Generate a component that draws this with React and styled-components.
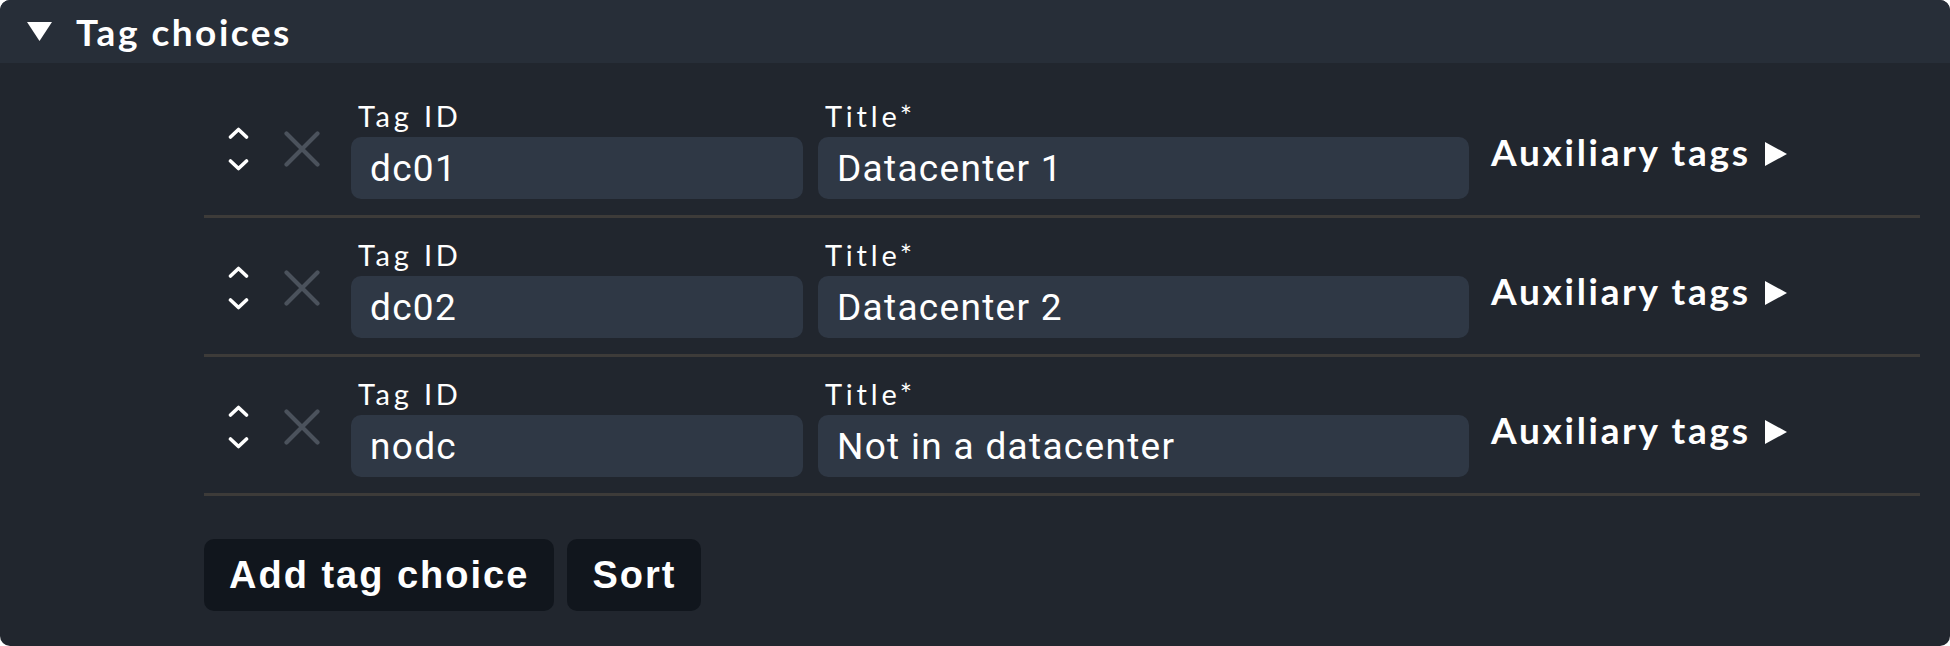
import React from "react";
import styled, { createGlobalStyle } from "styled-components";

const Global = createGlobalStyle`
  html, body { margin: 0; padding: 0; background: #ffffff; }
  #root { width: 1950px; height: 646px; }
`;

const Panel = styled.section`
  width: 1950px;
  height: 646px;
  box-sizing: border-box;
  background: #21262e;
  border-radius: 10px;
  overflow: hidden;
  display: flex;
  flex-direction: column;
`;

const Header = styled.header`
  height: 63px;
  flex: 0 0 63px;
  background: #272e38;
  display: flex;
  align-items: center;
  padding-left: 27px;
  gap: 24px;
  color: #ffffff;
  font-family: Lato, "Liberation Sans", sans-serif;
  font-weight: 700;
  font-size: 37px;
  letter-spacing: 2.5px;
`;

const Body = styled.div`
  padding: 16px 30px 0 204px;
  display: flex;
  flex-direction: column;
`;

const Row = styled.div`
  display: flex;
  align-items: center;
  padding: 20px 0 16px 24px;
  border-bottom: 3px solid #3d3b39;
`;

const Mover = styled.div`
  display: flex;
  flex-direction: column;
  align-items: center;
  gap: 20px;
  width: 21px;
  margin-right: 35px;
`;

const RemoveButton = styled.div`
  width: 36px;
  height: 36px;
  margin-right: 31px;
  display: flex;
`;

const Field = styled.label`
  display: flex;
  flex-direction: column;
  gap: 4px;
  width: ${(p) => p.$width}px;
  margin-right: ${(p) => p.$gap}px;
`;

const FieldLabel = styled.span`
  font-family: Lato, "Liberation Sans", sans-serif;
  font-size: 29px;
  line-height: 34px;
  letter-spacing: 3.8px;
  color: #ffffff;
  padding-left: 7px;
`;

const Input = styled.div`
  height: 62px;
  box-sizing: border-box;
  background: #2f3845;
  border-radius: 10px;
  padding-left: 19px;
  display: flex;
  align-items: center;
  font-family: Roboto, "Liberation Sans", sans-serif;
  font-size: 37px;
  letter-spacing: 1.3px;
  color: #ffffff;
`;

const AuxToggle = styled.div`
  display: flex;
  align-items: center;
  gap: 14px;
  padding-top: 5px;
  color: #ffffff;
  font-family: Lato, "Liberation Sans", sans-serif;
  font-weight: 700;
  font-size: 37px;
  letter-spacing: 2.7px;
`;

const Actions = styled.div`
  display: flex;
  gap: 13px;
  margin-top: 43px;
`;

const Button = styled.button`
  height: 72px;
  padding: 0 25px;
  border: none;
  border-radius: 10px;
  background: #11161d;
  color: #ffffff;
  font-family: "Liberation Sans", Arial, sans-serif;
  font-weight: 700;
  font-size: 38px;
  letter-spacing: 2px;
`;

const DownTriangle = () => (
  <svg width="25" height="19" viewBox="0 0 25 19">
    <polygon points="0,0 25,0 12.5,19" fill="#ffffff" />
  </svg>
);

const RightTriangle = () => (
  <svg width="22" height="24" viewBox="0 0 22 24" style={{ marginTop: 5 }}>
    <polygon points="0,0 22,12 0,24" fill="#ffffff" />
  </svg>
);

const ChevronUp = () => (
  <svg width="21" height="12" viewBox="0 0 21 12">
    <polyline points="2.5,10 10.5,2.5 18.5,10" fill="none" stroke="#ffffff" strokeWidth="3.6" strokeLinecap="round" strokeLinejoin="round" />
  </svg>
);

const ChevronDown = () => (
  <svg width="21" height="12" viewBox="0 0 21 12">
    <polyline points="2.5,2 10.5,9.5 18.5,2" fill="none" stroke="#ffffff" strokeWidth="3.6" strokeLinecap="round" strokeLinejoin="round" />
  </svg>
);

const Cross = () => (
  <svg width="36" height="36" viewBox="0 0 36 36">
    <path d="M2.5 2.5 L33.5 33.5 M33.5 2.5 L2.5 33.5" stroke="#4b525c" strokeWidth="4.2" strokeLinecap="round" />
  </svg>
);

const choices = [
  { id: "dc01", title: "Datacenter 1" },
  { id: "dc02", title: "Datacenter 2" },
  { id: "nodc", title: "Not in a datacenter" },
];

export default function App() {
  return (
    <>
      <Global />
      <Panel>
        <Header>
          <DownTriangle />
          <span>Tag choices</span>
        </Header>
        <Body>
          {choices.map((c) => (
            <Row key={c.id}>
              <Mover>
                <ChevronUp />
                <ChevronDown />
              </Mover>
              <RemoveButton>
                <Cross />
              </RemoveButton>
              <Field $width={452} $gap={15}>
                <FieldLabel>Tag ID</FieldLabel>
                <Input>{c.id}</Input>
              </Field>
              <Field $width={651} $gap={22}>
                <FieldLabel>Title*</FieldLabel>
                <Input>{c.title}</Input>
              </Field>
              <AuxToggle>
                <span>Auxiliary tags</span>
                <RightTriangle />
              </AuxToggle>
            </Row>
          ))}
          <Actions>
            <Button>Add tag choice</Button>
            <Button>Sort</Button>
          </Actions>
        </Body>
      </Panel>
    </>
  );
}
